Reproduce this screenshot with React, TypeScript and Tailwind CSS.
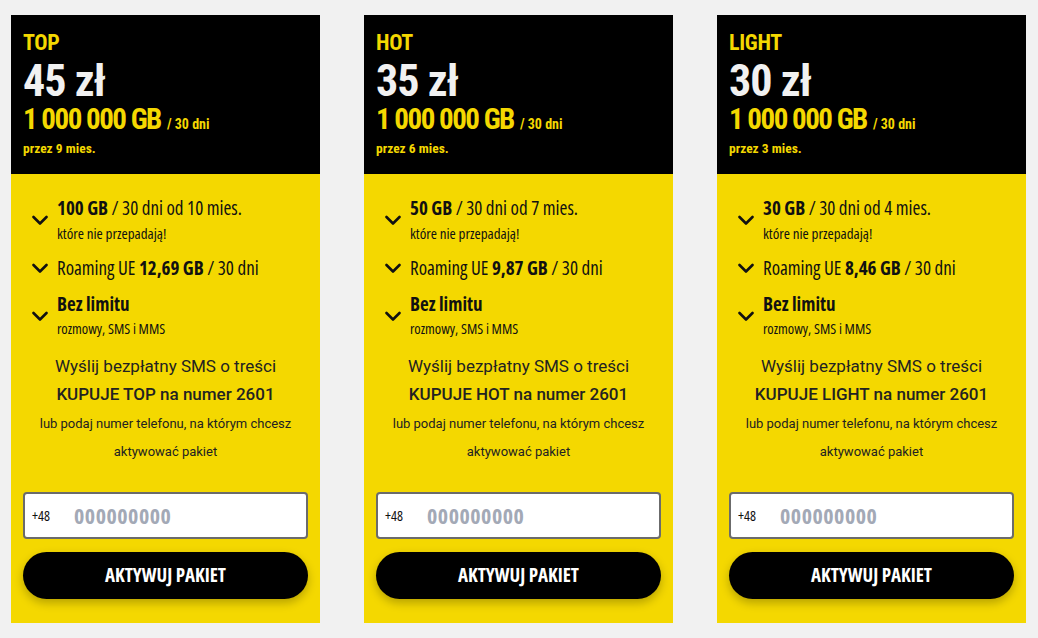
const plans = [
  { name: 'TOP', price: '45', months: 9, gb: '100', from: 10, roaming: '12,69' },
  { name: 'HOT', price: '35', months: 6, gb: '50', from: 7, roaming: '9,87' },
  { name: 'LIGHT', price: '30', months: 3, gb: '30', from: 4, roaming: '8,46' },
];

function Check() {
  return (
    <svg width="16" height="11" viewBox="0 0 16 11" className="shrink-0">
      <path d="M1.5 2 L8 8.5 L14.5 2" fill="none" stroke="#111" strokeWidth="2.6" strokeLinecap="round" strokeLinejoin="round" />
    </svg>
  );
}

function PlanCard({ plan }: { plan: (typeof plans)[number] }) {
  return (
    <div className="flex h-[608px] w-[309px] flex-col bg-[#f4d800]">
      <div className="h-[159px] bg-black px-3 pt-[15px] font-['Roboto',sans-serif] font-bold font-stretch-[75%]">
        <div className="text-[22px] leading-[26px] tracking-[-0.3px] text-[#f4d800]">{plan.name}</div>
        <div className="mt-[2px] text-[44px] leading-[46px] tracking-[-1px] text-[#f1f1f1]">{plan.price} zł</div>
        <div className="flex items-baseline gap-[6px] text-[#f4d800]">
          <span className="text-[29px] leading-[30px] tracking-[-1.5px]">1 000 000 GB</span>
          <span className="text-[14px]">/ 30 dni</span>
        </div>
        <div className="mt-[4px] text-[13.5px] leading-[18px] text-[#f4d800]">przez {plan.months} mies.</div>
      </div>

      <div className="flex flex-1 flex-col px-3 pt-[21px] pb-[24px] font-['Open_Sans',sans-serif] font-stretch-[75%] text-[#111]">
        <ul className="space-y-[10px] pl-[9px]">
          <li className="flex items-center gap-[9px]">
            <Check />
            <div>
              <div className="text-[19px] leading-[26px]">
                <b>{plan.gb} GB</b> / 30 dni od {plan.from} mies.
              </div>
              <div className="text-[15px] leading-[24px]">które nie przepadają!</div>
            </div>
          </li>
          <li className="flex items-center gap-[9px]">
            <Check />
            <div className="text-[19px] leading-[26px]">
              Roaming UE <b>{plan.roaming} GB</b> / 30 dni
            </div>
          </li>
          <li className="flex items-center gap-[9px]">
            <Check />
            <div>
              <div className="text-[19px] font-bold leading-[26px]">Bez limitu</div>
              <div className="text-[14.5px] leading-[24px]">rozmowy, SMS i MMS</div>
            </div>
          </li>
        </ul>

        <div className="mt-[11px] text-center font-['Roboto',sans-serif] font-stretch-normal text-[#222]">
          <p className="text-[17px] leading-[28px]">Wyślij bezpłatny SMS o treści</p>
          <p className="text-[17px] font-medium leading-[29px]">KUPUJE {plan.name} na numer 2601</p>
          <p className="text-[13px] leading-[29px]">lub podaj numer telefonu, na którym chcesz</p>
          <p className="text-[13px] leading-[28px]">aktywować pakiet</p>
        </div>

        <div className="mt-auto">
          <div className="flex h-[47px] items-center rounded-[4px] border-2 border-[#6b6b6b] bg-white pl-[7px]">
            <span className="w-[42px] text-[14px] text-[#111]">+48</span>
            <span className="text-[22px] font-bold tracking-[0.5px] text-[#a3a9b6]">000000000</span>
          </div>
          <button className="mt-[13px] flex h-[47px] w-full items-center justify-center rounded-full bg-black text-[19px] font-bold text-white shadow-[0_4px_10px_rgba(0,0,0,0.25)]">
            AKTYWUJ PAKIET
          </button>
        </div>
      </div>
    </div>
  );
}

export default function App() {
  return (
    <div className="flex min-h-screen gap-[44px] bg-[#f1f1f1] pt-[15px] pl-[11px]">
      {plans.map((p) => (
        <PlanCard key={p.name} plan={p} />
      ))}
    </div>
  );
}
